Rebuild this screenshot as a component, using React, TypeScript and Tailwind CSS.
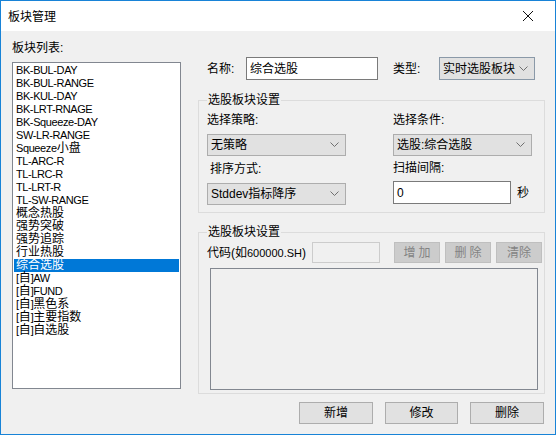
import React from "react";

const FONT = { fontFamily: '"Liberation Sans", "Noto Sans CJK SC", sans-serif' };

function Chevron() {
  return (
    <svg width="9" height="6" viewBox="0 0 9 6" className="shrink-0">
      <polyline points="0.5,0.5 4.5,4.5 8.5,0.5" fill="none" stroke="#707070" strokeWidth="1" />
    </svg>
  );
}

function Combo({ text, w, border = "border-[#adadad]" }: { text: string; w: string; border?: string }) {
  return (
    <div className={`${w} h-[22px] border ${border} bg-[#e1e1e1] flex items-center pl-[3px] pr-[6px] justify-between text-[12px] text-black`}>
      <span className="leading-[14px] whitespace-nowrap">{text}</span>
      <Chevron />
    </div>
  );
}

const items = [
  "BK-BUL-DAY",
  "BK-BUL-RANGE",
  "BK-KUL-DAY",
  "BK-LRT-RNAGE",
  "BK-Squeeze-DAY",
  "SW-LR-RANGE",
  "Squeeze小盘",
  "TL-ARC-R",
  "TL-LRC-R",
  "TL-LRT-R",
  "TL-SW-RANGE",
  "概念热股",
  "强势突破",
  "强势追踪",
  "行业热股",
  "综合选股",
  "[自]AW",
  "[自]FUND",
  "[自]黑色系",
  "[自]主要指数",
  "[自]自选股",
];

export default function App() {
  return (
    <div
      className="w-[556px] h-[435px] border border-[#1883d7] bg-[#f0f0f0] flex flex-col text-black overflow-hidden"
      style={FONT}
    >
      <div className="h-[30px] bg-white flex items-center justify-between pl-[7px] pr-[21px] shrink-0">
        <span className="text-[12px] leading-[14px] mt-[1px]">板块管理</span>
        <svg width="12" height="12" viewBox="0 0 12 12">
          <path d="M1 1 L11 11 M11 1 L1 11" stroke="#111" strokeWidth="1" />
        </svg>
      </div>
      <div className="flex pl-[11px]">
        <div className="w-[169px] flex flex-col">
          <div className="mt-[10px] text-[12px] leading-[14px] h-[14px]">板块列表:</div>
          <div className="mt-[7px] h-[327px] border border-[#828790] bg-white pt-[1px] px-[1px]">
            {items.map((t, i) => (
              <div
                key={i}
                className={`h-[13px] leading-[13px] pl-[2px] text-[11px] tracking-[-0.4px] whitespace-nowrap ${
                  t === "综合选股" ? "bg-[#0078d7] text-white" : ""
                }`}
              >
                {t.split(/([\u4e00-\u9fff]+)/).map((p, j) =>
                  /[\u4e00-\u9fff]/.test(p) ? (
                    <span key={j} className="text-[12px] tracking-[0px]">{p}</span>
                  ) : (
                    <span key={j}>{p}</span>
                  )
                )}
              </div>
            ))}
          </div>
        </div>
        <div className="ml-[17px] w-[347px] flex flex-col">
          <div className="mt-[26px] h-[23px] flex items-center text-[12px]">
            <span className="ml-[9px] w-[39px] leading-[14px]">名称:</span>
            <div className="w-[132px] h-[23px] border border-[#7a7a7a] bg-white flex items-center pl-[3px] leading-[14px]">
              综合选股
            </div>
            <span className="ml-[15px] w-[46px] leading-[14px]">类型:</span>
            <Combo text="实时选股板块" w="w-[96px] h-[23px]" border="border-[#8a99a8]" />
          </div>

          <fieldset className="mt-[13px] h-[120px] border border-[#dcdcdc] m-0 p-0 min-w-0">
            <legend className="ml-[8px] px-[1px] text-[12px] leading-[14px]">选股板块设置</legend>
            <div className="flex pl-[8px]">
              <div className="w-[186px] flex flex-col text-[12px]">
                <div className="mt-[6px] leading-[14px] h-[14px]">选择策略:</div>
                <div className="mt-[7px]">
                  <Combo text="无策略" w="w-[139px]" />
                </div>
                <div className="mt-[6px] leading-[14px] h-[14px] pl-[3px]">排序方式:</div>
                <div className="mt-[7px]">
                  <Combo text="Stddev指标降序" w="w-[139px]" />
                </div>
              </div>
              <div className="flex flex-col text-[12px]">
                <div className="mt-[6px] leading-[14px] h-[14px]">选择条件:</div>
                <div className="mt-[7px]">
                  <Combo text="选股:综合选股" w="w-[139px]" />
                </div>
                <div className="mt-[5px] leading-[14px] h-[14px]">扫描间隔:</div>
                <div className="mt-[6px] flex items-center">
                  <div className="w-[118px] h-[23px] border border-[#7a7a7a] bg-white flex items-center pl-[3px] leading-[14px]">
                    0
                  </div>
                  <span className="ml-[6px] leading-[14px]">秒</span>
                </div>
              </div>
            </div>
          </fieldset>

          <fieldset className="mt-[12px] h-[169px] border border-[#dcdcdc] m-0 p-0 min-w-0">
            <legend className="ml-[8px] px-[1px] text-[12px] leading-[14px]">选股板块设置</legend>
            <div className="mt-[3px] pl-[8px] flex items-center h-[21px] text-[12px]">
              <span className="w-[105px] leading-[14px] whitespace-nowrap">
                代码(如<span className="text-[11px]">600000.SH</span>)
              </span>
              <div className="w-[68px] h-[21px] border border-[#cccccc] bg-[#f0f0f0]" />
              <div className="ml-[14px] flex gap-[4px]">
                <div className="w-[46px] h-[21px] bg-[#cccccc] border border-[#bfbfbf] flex items-center justify-center text-[#838383] tracking-[3px] pl-[3px] leading-[14px]">增加</div>
                <div className="ml-[1px] w-[46px] h-[21px] bg-[#cccccc] border border-[#bfbfbf] flex items-center justify-center text-[#838383] tracking-[3px] pl-[3px] leading-[14px]">删除</div>
                <div className="ml-[1px] w-[46px] h-[21px] bg-[#cccccc] border border-[#bfbfbf] flex items-center justify-center text-[#838383] leading-[14px]">清除</div>
              </div>
            </div>
            <div className="mt-[5px] ml-[11px] w-[328px] h-[122px] border border-[#828790] bg-[#f0f0f0]" />
          </fieldset>

          <div className="mt-[8px] flex text-[12px]">
            <div className="ml-[101px] w-[74px] h-[22px] bg-[#e1e1e1] border border-[#adadad] flex items-center justify-center leading-[14px]">新增</div>
            <div className="ml-[12px] w-[73px] h-[22px] bg-[#e1e1e1] border border-[#adadad] flex items-center justify-center leading-[14px]">修改</div>
            <div className="ml-[12px] w-[74px] h-[22px] bg-[#e1e1e1] border border-[#adadad] flex items-center justify-center leading-[14px]">删除</div>
          </div>
        </div>
      </div>
    </div>
  );
}
